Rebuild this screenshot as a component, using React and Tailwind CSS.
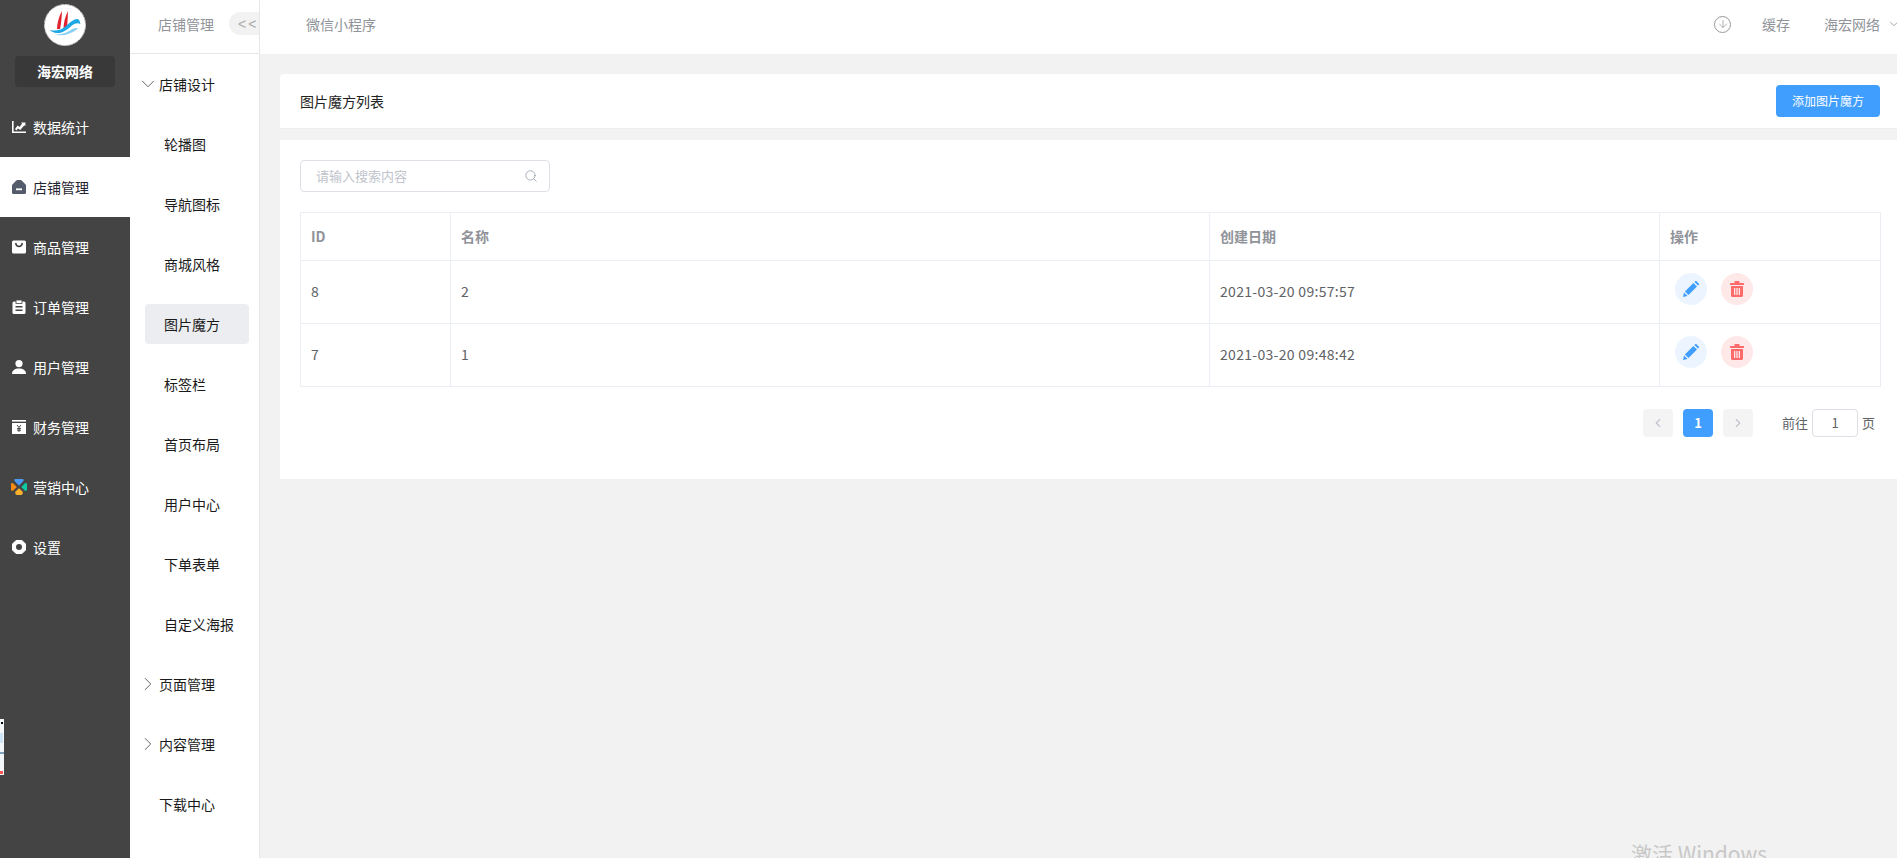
import { Search, ChevronDown, ChevronRight, ChevronLeft, ArrowDown } from "lucide-react";

const FONT = "font-['Noto_Sans_CJK_SC','Noto_Sans',sans-serif]";

function ChartIcon() {
  return (
    <svg width="14" height="14" viewBox="0 0 14 14" fill="#fff">
      <path d="M0 1h1.6v10.4H14V13H0z" />
      <path d="M3 9l2.6-3.4 2 1.4L10 3.4 9 2.6h4.4v3.6l-1-.9L8.2 10 6 8.4 4.4 10.4z" />
    </svg>
  );
}

function ShopIcon() {
  return (
    <svg width="14" height="14" viewBox="0 0 14 14">
      <path d="M0 5l4-4.2C4.4.3 5 0 5.6 0h2.8c.6 0 1.2.3 1.6.8L14 5v7.4c0 .9-.7 1.6-1.6 1.6H1.6C.7 14 0 13.3 0 12.4z" fill="#545c6b" />
      <rect x="4" y="8.4" width="6" height="1.8" fill="#fff" />
    </svg>
  );
}

function BagIcon() {
  return (
    <svg width="14" height="14" viewBox="0 0 14 14">
      <rect width="14" height="13" y="0.5" rx="1.5" fill="#fff" />
      <path d="M3.6 3c.4 2.2 1.7 3.4 3.4 3.4S10 5.2 10.4 3" fill="none" stroke="#444" strokeWidth="1.5" />
    </svg>
  );
}

function OrderIcon() {
  return (
    <svg width="14" height="14" viewBox="0 0 14 14">
      <rect x="0.5" y="1.5" width="13" height="12.5" rx="1.5" fill="#fff" />
      <rect x="4" y="0" width="6" height="3.5" fill="#fff" stroke="#444" strokeWidth="0.8" />
      <rect x="3.5" y="6" width="7" height="1.5" fill="#444" />
      <rect x="3.5" y="9.5" width="7" height="1.5" fill="#444" />
    </svg>
  );
}

function UserIcon() {
  return (
    <svg width="14" height="14" viewBox="0 0 14 14" fill="#fff">
      <circle cx="7" cy="3.6" r="3.6" />
      <path d="M0 14c0-3.400 2.800-5.400 7-5.400s7 2 7 5.400z" />
    </svg>
  );
}

function FinanceIcon() {
  return (
    <svg width="14" height="14" viewBox="0 0 14 14">
      <rect x="0" y="0" width="14" height="1.6" fill="#fff" />
      <rect x="0" y="3" width="14" height="11" fill="#fff" />
      <path d="M5 5l2 2.4L9 5M7 7.4V12M5 8.600h4M5 10.200h4" stroke="#444" strokeWidth="1" fill="none" />
    </svg>
  );
}

function MarketIcon() {
  return (
    <svg width="16" height="16" viewBox="0 0 16 16">
      <path d="M4.400 0h7.200c1 0 1.500 1.200.8 2L8 6.800 3.600 2c-.7-.8-.2-2 .8-2z" fill="#4b9bf5" />
      <path d="M0 5.500C0 4.200 1.400 3.700 2.300 4.500L5.800 8l-3.500 3.500C1.400 12.300 0 11.800 0 10.500z" fill="#fa8c16" />
      <path d="M16 5.500c0-1.300-1.400-1.800-2.300-1L10.200 8l3.500 3.500c.9.800 2.300.3 2.300-1z" fill="#10c9a0" />
      <path d="M8 9.200l3.400 3.300c1 1.300.2 3.500-1.800 3.500H6.400c-2 0-2.800-2.200-1.800-3.500z" fill="#fdb22b" />
    </svg>
  );
}

function SettingIcon() {
  return (
    <svg width="14" height="14" viewBox="0 0 14 14">
      <path d="M4 .5h6L13.500 4v6L10 13.500H4L.5 10V4z" fill="#fff" strokeLinejoin="round" stroke="#fff" />
      <circle cx="7" cy="7" r="3" fill="#444" />
    </svg>
  );
}

function PencilIcon() {
  return (
    <svg width="16" height="16" viewBox="0 0 16 16" fill="#409eff">
      <path d="M0 16l1-4.600L4.600 15z" />
      <path d="M1.900 10.500L10.400 2l3.600 3.600-8.500 8.500z" />
      <path d="M11.400 1l.7-.7c.4-.4 1-.4 1.400 0l2.200 2.200c.4.400.4 1 0 1.400l-.7.700z" />
    </svg>
  );
}

function TrashIcon() {
  return (
    <svg width="14" height="16" viewBox="0 0 14 16" fill="#ff6b6b">
      <rect x="4.500" y="0" width="5" height="2" rx="0.500" />
      <rect x="0" y="2" width="14" height="2" rx="0.500" />
      <path d="M1 5h12v9.500c0 .8-.7 1.500-1.500 1.500h-9C1.700 16 1 15.300 1 14.500zM4 7v7h1.300V7zm2.350 0v7h1.300V7zm2.350 0v7H10V7z" fillRule="evenodd" />
    </svg>
  );
}

function Logo() {
  return (
    <svg width="42" height="42" viewBox="0 0 42 42">
      <circle cx="21" cy="21" r="20.500" fill="#fff" stroke="#c4c4c4" strokeDasharray="5 1" />
      <path d="M13 25c.2-6 2-13 5-18-.3 6-.7 12-2 18z" fill="#e1212e" />
      <path d="M19.500 24.500c.2-6 1.600-12 4.500-17.500-.3 6-.3 11-1 15.500z" fill="#e1212e" />
      <path d="M6 26c6 1.500 11.500 0 16-4s8-7 11-7c2 0 3 2 3.400 5-2.400-1.500-5.400-1-8.400 1.500-5 4.500-10 8-15 7.500-3-.3-6-1.300-7-3z" fill="#1ea7e6" />
      <path d="M11 30.500c5 .5 10-1 14-3.500s7-3.500 9-2.500c-3 3-8 5-13 6.500-4 .5-7 .500-10-.500z" fill="#8ad0f2" />
    </svg>
  );
}

const mainMenu = [
  { label: "数据统计", icon: <ChartIcon /> },
  { label: "店铺管理", icon: <ShopIcon />, active: true },
  { label: "商品管理", icon: <BagIcon /> },
  { label: "订单管理", icon: <OrderIcon /> },
  { label: "用户管理", icon: <UserIcon /> },
  { label: "财务管理", icon: <FinanceIcon /> },
  { label: "营销中心", icon: <MarketIcon /> },
  { label: "设置", icon: <SettingIcon /> },
];

const designItems = ["轮播图", "导航图标", "商城风格", "图片魔方", "标签栏", "首页布局", "用户中心", "下单表单", "自定义海报"];

const rows = [
  { id: 8, name: "2", date: "2021-03-20 09:57:57" },
  { id: 7, name: "1", date: "2021-03-20 09:48:42" },
];

export default function App() {
  return (
    <div className={`relative flex h-[858px] w-[1897px] overflow-hidden bg-[#f2f2f2] ${FONT}`}>
      {/* Main sidebar */}
      <aside className="w-[130px] shrink-0 bg-[#444444]">
        <div className="flex h-[97px] flex-col items-center pt-1">
          <Logo />
          <div className="mt-[10px] flex h-[31px] w-[100px] items-center justify-center rounded-sm bg-[#393939] pb-[2px] text-sm font-bold leading-none text-white">
            海宏网络
          </div>
        </div>
        {mainMenu.map((item) => (
          <div
            key={item.label}
            className={`flex h-[60px] items-center pb-[1px] text-sm ${item.active ? "bg-white text-[#1f2430]" : "text-white"}`}
          >
            <span className="flex w-[33px] justify-center pl-[5px]">{item.icon}</span>
            <span>{item.label}</span>
          </div>
        ))}
      </aside>

      {/* Sub sidebar */}
      <aside className="w-[130px] shrink-0 overflow-hidden border-r border-[#e6e6e6] bg-white text-sm text-[#1a1a1a]">
        <div className="flex h-[54px] items-center whitespace-nowrap border-b border-[#e6e6e6] pb-[6px] pl-[28px] text-[#909399]">
          <span>店铺管理</span>
          <span className="ml-[15px] flex h-[23px] w-[40px] shrink-0 items-center rounded-l-full bg-[#f2f2f2] pl-[9px] font-['Liberation_Sans',sans-serif] text-sm tracking-[2px] text-[#aaaaaa]">
            &lt;&lt;
          </span>
        </div>
        <div className="flex h-[60px] items-center pl-[7px]">
          <ChevronDown size={22} strokeWidth={1} className="text-[#555]" />
          <span>店铺设计</span>
        </div>
        <div className="flex flex-col">
          {designItems.map((label) => (
            <div key={label} className="flex h-[60px] items-center pl-[15px]">
              <div
                className={`flex h-[40px] w-[104px] items-center rounded pl-[19px] ${label === "图片魔方" ? "bg-[#ebedf0]" : ""}`}
              >
                {label}
              </div>
            </div>
          ))}
        </div>
        <div className="flex h-[60px] items-center pl-[7px]">
          <ChevronRight size={22} strokeWidth={1} className="text-[#555]" />
          <span>页面管理</span>
        </div>
        <div className="flex h-[60px] items-center pl-[7px]">
          <ChevronRight size={22} strokeWidth={1} className="text-[#555]" />
          <span>内容管理</span>
        </div>
        <div className="flex h-[60px] items-center pl-[29px]">下载中心</div>
      </aside>

      {/* Right side */}
      <div className="flex min-w-0 flex-1 flex-col">
        <header className="flex h-[54px] shrink-0 items-center bg-white pb-[6px] pl-[46px] text-sm text-[#909399]">
          <span>微信小程序</span>
          <div className="ml-auto flex items-center">
            <span className="flex h-[17px] w-[17px] items-center justify-center rounded-full border border-[#999]">
              <ArrowDown size={12} strokeWidth={1.25} className="text-[#888]" />
            </span>
            <span className="ml-[31px]">缓存</span>
            <span className="ml-[34px]">海宏网络</span>
            <ChevronDown size={14} strokeWidth={1.25} className="ml-[7px] mr-[-4px] shrink-0 text-[#888]" />
          </div>
        </header>

        <main className="pl-[20px] pt-[20px]">
          <div className="flex h-[55px] items-center justify-between rounded-tl-sm border-b border-[#eeeeee] bg-white pl-[20px] pr-[17px] text-sm text-[#222]">
            <span>图片魔方列表</span>
            <button className="flex h-[32px] w-[104px] items-center justify-center rounded-sm bg-[#409eff] text-xs text-white">
              添加图片魔方
            </button>
          </div>

          <div className="mt-[11px] h-[339px] bg-white pl-[20px] pt-[20px]">
            <div className="flex h-[32px] w-[250px] items-center rounded border border-[#dcdfe6] pb-[1px] pl-[15px] pr-[11px] text-[13px] text-[#c0c4cc]">
              <span>请输入搜索内容</span>
              <Search size={14} strokeWidth={1.25} className="ml-auto text-[#8a96a5]" />
            </div>

            <table className="mt-[20px] w-[1580px] table-fixed border-collapse text-sm text-[#606266]">
              <colgroup>
                <col className="w-[150px]" />
                <col className="w-[759px]" />
                <col className="w-[450px]" />
                <col className="w-[221px]" />
              </colgroup>
              <thead>
                <tr className="h-[48px] text-left text-[#909399]">
                  <th className="border border-[#ebeef5] pb-[2px] pl-[10px] font-bold">ID</th>
                  <th className="border border-[#ebeef5] pb-[2px] pl-[10px] font-bold">名称</th>
                  <th className="border border-[#ebeef5] pb-[2px] pl-[10px] font-bold">创建日期</th>
                  <th className="border border-[#ebeef5] pb-[2px] pl-[10px] font-bold">操作</th>
                </tr>
              </thead>
              <tbody>
                {rows.map((row) => (
                  <tr key={row.id} className="h-[63px]">
                    <td className="border border-[#ebeef5] pb-[3px] pl-[10px]">{row.id}</td>
                    <td className="border border-[#ebeef5] pb-[3px] pl-[10px]">{row.name}</td>
                    <td className="border border-[#ebeef5] pb-[3px] pl-[10px] tracking-[0.3px]">{row.date}</td>
                    <td className="border border-[#ebeef5] pl-[15px]">
                      <div className="flex gap-[14px] pb-[6px]">
                        <span className="flex h-[32px] w-[32px] items-center justify-center rounded-full bg-[#ecf5ff]">
                          <PencilIcon />
                        </span>
                        <span className="flex h-[32px] w-[32px] items-center justify-center rounded-full bg-[#ffe8e8]">
                          <TrashIcon />
                        </span>
                      </div>
                    </td>
                  </tr>
                ))}
              </tbody>
            </table>

            <div className="mt-[22px] flex w-[1580px] items-center text-[13px] text-[#606266]">
              <span className="ml-auto flex h-[28px] w-[30px] items-center justify-center rounded-sm bg-[#f4f4f5] text-[#c0c4cc]">
                <ChevronLeft size={14} />
              </span>
              <span className="ml-[10px] flex h-[28px] w-[30px] items-center justify-center rounded-sm bg-[#409eff] font-bold text-white">
                1
              </span>
              <span className="ml-[10px] flex h-[28px] w-[30px] items-center justify-center rounded-sm bg-[#f4f4f5] text-[#c0c4cc]">
                <ChevronRight size={14} />
              </span>
              <span className="ml-[29px]">前往</span>
              <span className="ml-[4px] flex h-[28px] w-[46px] items-center justify-center rounded border border-[#dcdfe6]">
                1
              </span>
              <span className="ml-[4px] mr-[5px]">页</span>
            </div>
          </div>
        </main>
      </div>

      {/* Windows activation watermark, cut off at the bottom edge */}
      <div className="absolute left-[1631px] top-[843px] text-[21px] leading-none whitespace-nowrap text-[#c8c8c8]">
        激活 Windows
      </div>

      {/* Sliver of a window peeking in at the left edge */}
      <div className="absolute left-0 top-[719px] h-[56px] w-[4px] bg-[#f4f7fa]">
        <div className="absolute left-[1px] top-[3px] h-[2px] w-[2px] bg-black" />
        <div className="absolute left-0 top-[14px] h-[10px] w-[3px] bg-[#cfe4f5]" />
        <div className="absolute left-0 top-[33px] h-[2px] w-[4px] bg-[#7fa3c0]" />
        <div className="absolute bottom-[1px] left-0 h-[3px] w-[3px] bg-[#f55]" />
      </div>
    </div>
  );
}
